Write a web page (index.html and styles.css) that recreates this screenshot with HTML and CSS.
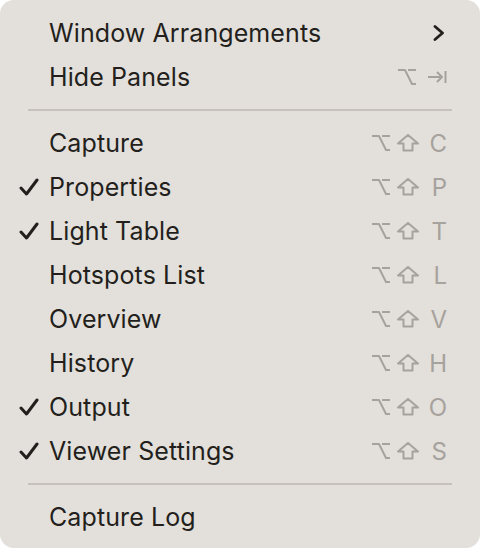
FILE: index.html
```html
<!DOCTYPE html>
<html>
    <head>
        <meta charset="UTF-8">
        <title>Menu</title>
        <link rel="stylesheet" href="styles.css">
    </head>
    <body>
        <div class="menu">
            <div class="item">
                <span class="check"></span>
                <span class="label">Window Arrangements</span>
                <svg class="chevron" viewBox="0 0 12 16"><path d="M2 1.5 L9.5 8 L2 14.5"/></svg>
            </div>
            <div class="item">
                <span class="check"></span>
                <span class="label">Hide Panels</span>
                <span class="keys">
                    <svg class="opt" viewBox="0 0 20 18"><path d="M1 2 H8 L15 16 H19 M11 2 H19"/></svg>
                    <svg class="tab" viewBox="0 0 20 14"><path d="M1 7 H15 M10 2 L15 7 L10 12 M18.5 1 V13"/></svg>
                </span>
            </div>

            <div class="sep"></div>

            <div class="item">
                <span class="check"></span>
                <span class="label">Capture</span>
                <span class="keys"><svg class="opt" viewBox="0 0 20 18"><path d="M1 2 H8 L15 16 H19 M11 2 H19"/></svg><svg class="shift" viewBox="0 0 22 18"><path d="M11 1 L21 9.5 H15.5 V16.5 H6.5 V9.5 H1 Z"/></svg><span class="letter">C</span></span>
            </div>
            <div class="item">
                <span class="check"><svg viewBox="0 0 20 18"><path d="M2 10 L7.5 16 L18 2"/></svg></span>
                <span class="label">Properties</span>
                <span class="keys"><svg class="opt" viewBox="0 0 20 18"><path d="M1 2 H8 L15 16 H19 M11 2 H19"/></svg><svg class="shift" viewBox="0 0 22 18"><path d="M11 1 L21 9.5 H15.5 V16.5 H6.5 V9.5 H1 Z"/></svg><span class="letter">P</span></span>
            </div>
            <div class="item">
                <span class="check"><svg viewBox="0 0 20 18"><path d="M2 10 L7.5 16 L18 2"/></svg></span>
                <span class="label">Light Table</span>
                <span class="keys"><svg class="opt" viewBox="0 0 20 18"><path d="M1 2 H8 L15 16 H19 M11 2 H19"/></svg><svg class="shift" viewBox="0 0 22 18"><path d="M11 1 L21 9.5 H15.5 V16.5 H6.5 V9.5 H1 Z"/></svg><span class="letter">T</span></span>
            </div>
            <div class="item">
                <span class="check"></span>
                <span class="label">Hotspots List</span>
                <span class="keys"><svg class="opt" viewBox="0 0 20 18"><path d="M1 2 H8 L15 16 H19 M11 2 H19"/></svg><svg class="shift" viewBox="0 0 22 18"><path d="M11 1 L21 9.5 H15.5 V16.5 H6.5 V9.5 H1 Z"/></svg><span class="letter">L</span></span>
            </div>
            <div class="item">
                <span class="check"></span>
                <span class="label">Overview</span>
                <span class="keys"><svg class="opt" viewBox="0 0 20 18"><path d="M1 2 H8 L15 16 H19 M11 2 H19"/></svg><svg class="shift" viewBox="0 0 22 18"><path d="M11 1 L21 9.5 H15.5 V16.5 H6.5 V9.5 H1 Z"/></svg><span class="letter">V</span></span>
            </div>
            <div class="item">
                <span class="check"></span>
                <span class="label">History</span>
                <span class="keys"><svg class="opt" viewBox="0 0 20 18"><path d="M1 2 H8 L15 16 H19 M11 2 H19"/></svg><svg class="shift" viewBox="0 0 22 18"><path d="M11 1 L21 9.5 H15.5 V16.5 H6.5 V9.5 H1 Z"/></svg><span class="letter">H</span></span>
            </div>
            <div class="item">
                <span class="check"><svg viewBox="0 0 20 18"><path d="M2 10 L7.5 16 L18 2"/></svg></span>
                <span class="label">Output</span>
                <span class="keys"><svg class="opt" viewBox="0 0 20 18"><path d="M1 2 H8 L15 16 H19 M11 2 H19"/></svg><svg class="shift" viewBox="0 0 22 18"><path d="M11 1 L21 9.5 H15.5 V16.5 H6.5 V9.5 H1 Z"/></svg><span class="letter">O</span></span>
            </div>
            <div class="item">
                <span class="check"><svg viewBox="0 0 20 18"><path d="M2 10 L7.5 16 L18 2"/></svg></span>
                <span class="label">Viewer Settings</span>
                <span class="keys"><svg class="opt" viewBox="0 0 20 18"><path d="M1 2 H8 L15 16 H19 M11 2 H19"/></svg><svg class="shift" viewBox="0 0 22 18"><path d="M11 1 L21 9.5 H15.5 V16.5 H6.5 V9.5 H1 Z"/></svg><span class="letter">S</span></span>
            </div>

            <div class="sep"></div>

            <div class="item">
                <span class="check"></span>
                <span class="label">Capture Log</span>
            </div>
        </div>
    </body>
</html>
```

FILE: styles.css
```css
/* 전체 배경 */
body{
    margin: 0;
    background: #ffffff;
    font-family: Inter, "Noto Sans", sans-serif;
}
/* 메뉴 박스 */
.menu{
    width: 480px;
    height: 548px;
    box-sizing: border-box;
    background: #e3dfda;
    border-radius: 14px;
    padding: 11px 0 9px;
}
/* 메뉴 한줄 */
.item{
    display: flex;
    align-items: center;
    height: 44px;
    padding: 0 33px 0 18px;
    color: #231f1c;
    font-size: 25px;
}
/* 체크표시 */
.check{
    display: flex;
    align-items: center;
    width: 31px;
    flex-shrink: 0;
}
.check svg{
    width: 20px;
    height: 18px;
    margin-left: 1px;
    fill: none;
    stroke: #231f1c;
    stroke-width: 3;
    stroke-linecap: round;
    stroke-linejoin: round;
}
.label{
    flex: 1;
    letter-spacing: 0.1px;
}
/* 단축키 */
.keys{
    display: flex;
    align-items: center;
    color: #a6a29d;
}
.keys svg{
    flex-shrink: 0;
    fill: none;
    stroke: #a6a29d;
    stroke-width: 2;
    stroke-linejoin: round;
}
.opt{
    width: 20px;
    height: 18px;
}
.shift{
    width: 22px;
    height: 18px;
    margin-left: 6px;
    stroke-width: 1.8;
}
.tab{
    width: 20px;
    height: 14px;
    margin-left: 10px;
}
.letter{
    width: 26px;
    margin-left: 2px;
    text-align: right;
    font-size: 24px;
}
.chevron{
    width: 12px;
    height: 16px;
    fill: none;
    stroke: #231f1c;
    stroke-width: 2.8;
    stroke-linecap: round;
    stroke-linejoin: round;
    margin-right: 2px;
}
/* 구분선 */
.sep{
    height: 2px;
    background: #c6c1bc;
    margin: 10px 28px 10px 28px;
}
```
